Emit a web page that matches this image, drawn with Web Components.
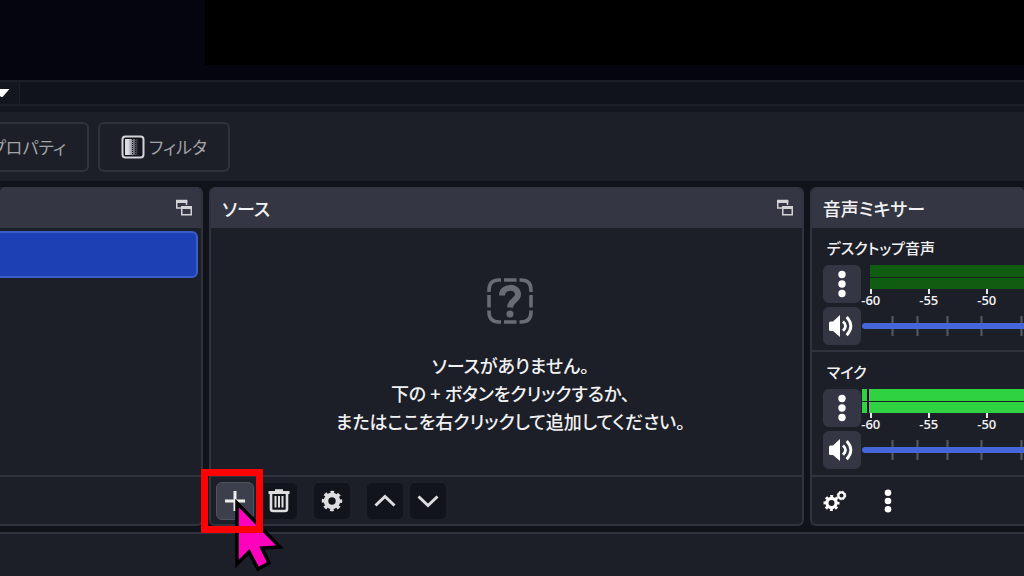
<!DOCTYPE html>
<html lang="ja">
<head>
<meta charset="utf-8">
<title>OBS</title>
<style>
html,body{height:100%;margin:0}
body{background:#11131b;color:#f2f2f4;font:500 18px/28px "Noto Sans CJK JP",sans-serif;font-feature-settings:"palt";overflow:hidden;
--panel:#1c1f27;--line:#30333d;--head:#343743;--deep:#12141b}
</style>
</head>
<body>
<studio-window></studio-window>
<script>
const ICONS = {
  plus:'<svg width="22" height="22" viewBox="0 0 22 22"><path d="M11 1V21M1 11H21" stroke="#eee" stroke-width="3"/></svg>',
  trash:'<svg width="22" height="24" viewBox="0 0 22 24" fill="none" stroke="#dedee1"><path d="M0.500 3.500H21.500" stroke-width="3"/><path d="M7 1.500H15" stroke-width="2.500"/><path d="M3 5V20Q3 22 5 22H17Q19 22 19 20V5" stroke-width="2.600"/><path d="M7.500 7V18.500M11 7V18.500M14.500 7V18.500" stroke-width="2"/></svg>',
  gear:'<svg width="22" height="22" viewBox="-11 -11 22 22" fill="none" stroke="#dedee1"><circle r="6" stroke-width="4.600"/><circle r="8.700" stroke-width="3" stroke-dasharray="3.600 3.233" stroke-dashoffset="1.800"/></svg>',
  up:'<svg width="22" height="22" viewBox="0 0 22 22"><path d="M1.500 15.500L11 6.500L20.500 15.500" fill="none" stroke="#dedee1" stroke-width="3"/></svg>',
  down:'<svg width="22" height="22" viewBox="0 0 22 22"><path d="M1.500 6.500L11 15.500L20.500 6.500" fill="none" stroke="#dedee1" stroke-width="3"/></svg>',
  popout:'<svg width="18" height="18" viewBox="0 0 18 18" fill="none" stroke="#d2d2d7"><path d="M6 9H1.750V1.500H11.500V6" stroke-width="1.500"/><path d="M1 2.500H12.250" stroke-width="3"/><path d="M6.750 8H16.250V15.750H6.750Z" stroke-width="1.500"/><path d="M6 8.500H17" stroke-width="3"/></svg>',
  dots:'<svg width="8" height="28" viewBox="0 0 8 28" fill="#fff"><circle cx="4" cy="4.500" r="3.700"/><circle cx="4" cy="14" r="3.700"/><circle cx="4" cy="23.500" r="3.700"/></svg>',
  smalldots:'<svg width="8" height="24" viewBox="0 0 8 24" fill="#fff"><circle cx="4" cy="3.700" r="3.300"/><circle cx="4" cy="12" r="3.300"/><circle cx="4" cy="20.300" r="3.300"/></svg>',
  speaker:'<svg width="28" height="24" viewBox="0 0 28 24"><path d="M1 9Q1 7.500 2.500 7.500H5L12 1V23L5 17H2.500Q1 17 1 15.500Z" fill="#fff"/><path d="M15 7.500Q20 12 15 16.800M18.700 3Q27 12 18.700 21.200" fill="none" stroke="#fff" stroke-width="2.800"/></svg>',
  gears:'<svg width="24" height="22" viewBox="0 0 24 22" fill="none" stroke="#fff"><g transform="translate(8.500 13)"><circle r="4.600" stroke-width="3.200"/><circle r="6.700" stroke-width="2.600" stroke-dasharray="2.800 2.462" stroke-dashoffset="1.400"/></g><circle cx="18.500" cy="5.500" r="3.200" stroke-width="2.300"/><circle cx="18.500" cy="5.500" r="4.300" stroke-width="1" stroke-dasharray="1.800 1.577"/></svg>',
  filter:'<svg width="24" height="24" viewBox="0 0 24 24"><defs><linearGradient id="g"><stop offset=".2" stop-color="#dcdce4"/><stop offset=".85" stop-color="#14161d"/></linearGradient></defs><rect x="1.500" y="1.500" width="21" height="21" rx="3" fill="#14161d" stroke="#d4d4d8" stroke-width="2"/><rect x="4" y="4" width="16" height="16" fill="url(#g)"/><path d="M11.500 4V20M14.500 4V20M17 4V20" stroke="#14161d" stroke-width="1" stroke-dasharray="1 1"/></svg>',
  unknown:'<svg width="46" height="46" viewBox="0 0 46 46" fill="none" stroke="#6a6c73" stroke-width="3.600"><path d="M2 14V12Q2 2 12 2H14M17 2H29.500M32.500 2H34Q44 2 44 12V14M44 17V29.500M44 32.500V34Q44 44 34 44H32.500M29.500 44H17M14 44H12Q2 44 2 34V32.500M2 29.500V17"/><path d="M15 17.500C15 7.500 31 7.500 31 16.500C31 22 23.500 22 23 29.500" stroke-width="6"/><circle cx="23" cy="36" r="3.500" fill="#6a6c73" stroke="none"/></svg>'
};
function define(name, css, html, setup){
  customElements.define(name, class extends HTMLElement{
    constructor(){
      super();
      const t=document.createElement('template');
      t.innerHTML='<style>*{box-sizing:border-box}:host{box-sizing:border-box}svg{display:block}button{font:inherit;font-feature-settings:inherit;color:inherit;padding:0;margin:0}'+css+'</style>'+html;
      this.attachShadow({mode:'open'}).append(t.content.cloneNode(true));
    }
    connectedCallback(){ if(setup) setup(this,this.shadowRoot); }
  });
}
define('ui-icon',':host{display:block}','<span></span>',(h,r)=>{r.querySelector('span').innerHTML=ICONS[h.getAttribute('name')];});

define('icon-button',`:host{display:block;width:36px;height:36px}
button{width:100%;height:100%;display:flex;align-items:center;justify-content:center;border:0;border-radius:5px;background:var(--deep)}
:host([kind=active]){width:38px;height:38px}:host([kind=active]) button{background:#3c404d;border:1px solid #505460;border-radius:6px}
:host([kind=raised]){width:38px;height:38px}:host([kind=raised]) button{background:var(--head);border-radius:6px}
:host([kind=flat]) button{background:none}
:host([kind=bare]){width:18px;height:18px}:host([kind=bare]) button{background:none}`,
'<button type="button"><ui-icon></ui-icon></button>',(h,r)=>{
  r.querySelector('button').setAttribute('aria-label',h.getAttribute('label'));
  r.querySelector('ui-icon').replaceWith(Object.assign(document.createElement('span'),{innerHTML:ICONS[h.getAttribute('icon')]}));
});

define('preview-area',`:host{display:block;height:80px;background:#04050e;padding-left:20%}
div{height:65px;background:#000}`,'<div></div>');

define('scroll-strip',`:host{display:flex;height:32px;background:#14161e;padding-bottom:6px}
.pick{width:20px;border:solid #1d1f28;border-width:2px 1px 2px 0;display:flex;align-items:center;background:none}
.rail{flex:1;border:solid #1d1f28;border-width:2px 0;background:#11131b}`,
`<button class="pick" type="button" aria-label="ズーム"><svg width="10" height="8" viewBox="0 0 10 8"><path d="M-6 0H9.500L2.500 8H1Z" fill="#fff"/></svg></button><div class="rail"></div>`);

define('tool-button',`:host{display:block;width:132px;height:50px}
button{width:100%;height:100%;display:flex;align-items:center;justify-content:center;gap:4px;background:none;border:2px solid var(--line);border-radius:6px;color:#a3a4a8;font-size:17px;font-weight:400;white-space:nowrap;overflow:hidden}
:host([cut]){width:89px}:host([cut]) button{justify-content:flex-end;padding-right:21px;border-left:0;border-radius:0 6px 6px 0}`,
'<button type="button"><slot name="icon"></slot><slot></slot></button>');

define('source-toolbar',`:host{display:flex;align-items:center;gap:9px;height:69px;background:var(--panel)}`,
'<tool-button cut>プロパティ</tool-button><tool-button><ui-icon slot="icon" name="filter"></ui-icon>フィルタ</tool-button>');

define('dock-panel',`:host{display:flex;flex-direction:column;min-width:0;background:var(--panel);border:2px solid var(--line);border-top:0;border-radius:6px}
header{flex:none;height:41px;display:flex;align-items:center;justify-content:space-between;padding:0 8px 0 11px;background:var(--head);border-radius:5px 5px 0 0}
h2{font:inherit;margin:0;white-space:nowrap}
main{flex:1;min-height:0;display:flex;flex-direction:column}
footer{flex:none;height:49px;border-top:2px solid var(--line);display:flex;align-items:center;gap:7px;padding-left:5px}
:host([edge=left]){border-left:0;border-radius:0 6px 6px 0}
:host([edge=right]){border-right:0;border-radius:6px 0 0 6px;overflow:hidden}
:host([edge=right]) .pop{display:none}`,
`<header><h2><slot name="title"></slot></h2><icon-button class="pop" kind="bare" icon="popout" label="ドックを切り離す"></icon-button></header><main><slot></slot></main><footer><slot name="tools"></slot></footer>`);

define('scene-item',`:host{display:block;padding:3px 3px 0 0}button{display:block;width:100%;height:47px;background:#1d41b4;border:2px solid #3c5dc9;border-left:0;border-radius:0 6px 6px 0}`,
'<button type="button" aria-label="シーン"></button>');

define('empty-sources',`:host{display:flex;flex-direction:column;align-items:center;padding:50px 0 0 8px;text-align:center;white-space:nowrap}
p{margin:27px 0 0}`,
'<ui-icon name="unknown"></ui-icon><p>ソースがありません。<br>下の + ボタンをクリックするか、<br>またはここを右クリックして追加してください。</p>');

define('add-highlight',`:host{display:block;position:relative}
.box{position:absolute;left:-15px;top:-13px;width:62px;height:64px;border:7px solid #fb0204;pointer-events:none}
svg{position:absolute;left:17px;top:13px;pointer-events:none}`,
`<slot></slot><svg width="56" height="78" viewBox="0 0 56 78"><path d="M4 8L47 52L29 53L36 68L25 74L16 57L4 69Z" fill="#ff00bc" stroke="#000" stroke-width="3.500"/></svg><div class="box"></div>`);

define('level-meter',`:host{display:block;height:42px;position:relative}
.bars{height:24px;margin-left:8px;display:grid;grid-template-rows:1fr 1fr;gap:1px}
.bars i{background:#105d12}
:host([live]) .bars{margin-left:0}
:host([live]) .bars i{background:linear-gradient(90deg,#2fd240 5px,#11131b 5px 7px,#9a9ca0 7px 8px,#2fd240 8px)}
.scale{display:flex;margin-left:-20px;font:600 13px/18px "Open Sans",sans-serif}
.scale span{flex:none;width:58px;text-align:center;display:flex;flex-direction:column;align-items:center}
.scale span::before{content:"";width:2px;height:5px;background:#e6e6e8;margin-bottom:-3px}`,
'<div class="bars" role="meter" aria-label="レベル" aria-valuenow="-5" aria-valuemin="-60" aria-valuemax="0"><i></i><i></i></div><div class="scale"><span>-60</span><span>-55</span><span>-50</span></div>');

define('mixer-channel',`:host{display:block;height:124px;border-bottom:2px solid var(--line);padding-left:11px;overflow:hidden;flex:none}
:host([last]){border-bottom:0}
label{display:block;height:37px;padding:6px 0 0 4px;font-size:15px;white-space:nowrap}
.row{display:grid;grid-template-columns:38px minmax(0,1fr);column-gap:1px;row-gap:4px;grid-template-rows:38px 37px}
.slide{display:grid;align-items:center}.slide>*{grid-area:1/1}
input{appearance:none;width:100%;height:20px;margin:0;background:none}
input::-webkit-slider-runnable-track{height:6px;border-radius:3px 0 0 3px;background:#4565d8}
input::-webkit-slider-thumb{appearance:none;width:1px;height:6px;background:#4565d8}`,
`<label for="v"><slot></slot></label><div class="row"><icon-button kind="raised" icon="dots" label="オプション"></icon-button><div class="m"></div><icon-button kind="raised" icon="speaker" label="ミュート"></icon-button><div class="slide"><svg width="163" height="20" viewBox="0 0 163 20"><path d="M30.500 0V20M55.500 0V20M85.500 0V20M119.500 0V20M159.500 0V20" stroke="#565964" stroke-width="2"/></svg><input id="v" type="range" min="0" max="100" value="100"></div></div>`,
(h,r)=>{const m=document.createElement('level-meter');if(h.hasAttribute('live'))m.setAttribute('live','');r.querySelector('.m').replaceWith(m);});

define('studio-window',`:host{display:flex;flex-direction:column;min-height:100vh}
.docks{display:grid;grid-template-columns:203fr 594fr 214fr;column-gap:6px;height:339px;margin-top:6px}
.status{flex:1;margin-top:6px;background:var(--panel);border-top:2px solid var(--line)}
.gap{width:3px}.push{margin-right:10px}`,
`<preview-area></preview-area><scroll-strip></scroll-strip><source-toolbar></source-toolbar>
<div class="docks">
<dock-panel edge="left"><scene-item></scene-item></dock-panel>
<dock-panel><span slot="title">ソース</span><empty-sources></empty-sources>
<add-highlight slot="tools"><icon-button kind="active" icon="plus" label="追加"></icon-button></add-highlight>
<icon-button slot="tools" icon="trash" label="削除"></icon-button><span slot="tools" class="gap"></span>
<icon-button slot="tools" icon="gear" label="設定"></icon-button><span slot="tools" class="gap"></span>
<icon-button slot="tools" icon="up" label="上へ"></icon-button><icon-button slot="tools" icon="down" label="下へ"></icon-button></dock-panel>
<dock-panel edge="right"><span slot="title">音声ミキサー</span>
<mixer-channel>デスクトップ音声</mixer-channel><mixer-channel live last>マイク</mixer-channel>
<icon-button slot="tools" class="push" kind="flat" icon="gears" label="詳細設定"></icon-button><icon-button slot="tools" kind="flat" icon="smalldots" label="メニュー"></icon-button></dock-panel>
</div><div class="status"></div>`);
</script>
</body>
</html>
